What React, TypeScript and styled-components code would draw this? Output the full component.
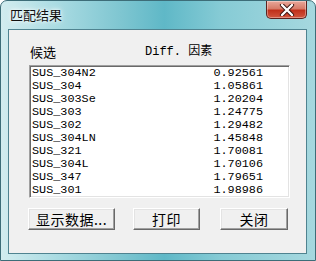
import React from 'react';
import styled, { createGlobalStyle } from 'styled-components';

const Global = createGlobalStyle`
  html, body {
    margin: 0;
    padding: 0;
    background: #ffffff;
  }
`;

const Frame = styled.div`
  width: 316px;
  height: 261px;
  box-sizing: border-box;
  border: 1px solid #3d6d78;
  border-radius: 7px 7px 0 0;
  background: linear-gradient(90deg, #d2ecef 0%, #a9dbe2 18%, #7fc6d1 38%, #5fb8c7 52%, #86cbd5 70%, #a6d8df 100%);
  display: flex;
  flex-direction: column;
  overflow: hidden;
  font-family: 'Noto Sans CJK SC', sans-serif;
`;

const TitleBar = styled.div`
  height: 28px;
  display: flex;
  align-items: flex-start;
  justify-content: space-between;
  padding: 0 8px 0 9px;
`;

const Title = styled.span`
  margin-top: 5px;
  font-size: 13px;
  line-height: 17px;
  color: #101010;
  text-shadow: 0 0 6px #ffffff, 0 0 3px #ffffff;
`;

const CloseButton = styled.div`
  width: 41px;
  height: 18px;
  box-sizing: border-box;
  border: 1px solid #5b2320;
  border-top: none;
  border-radius: 0 0 5px 5px;
  background: linear-gradient(180deg, #e9a89b 0%, #d77b68 45%, #c0301b 55%, #d2563f 100%);
  display: flex;
  align-items: center;
  justify-content: center;
  box-shadow: inset 0 0 0 1px rgba(255, 255, 255, 0.35);
`;

const Client = styled.div`
  margin: 0 8px 0 7px;
  height: 225px;
  box-sizing: border-box;
  border: 1px solid #4f8390;
  background: #f0f0f0;
  padding: 14px 0 0 20px;
  display: flex;
  flex-direction: column;
`;

const Header = styled.div`
  display: grid;
  grid-template-columns: 115px auto;
  height: 16px;
  line-height: 16px;
  padding-left: 1px;
  font-family: 'Liberation Mono', 'Noto Sans CJK SC', monospace;
  font-size: 12px;
  color: #000;

  & > span:first-child {
    font-family: 'Noto Sans CJK SC', sans-serif;
    font-size: 13px;
  }
`;

const ListBox = styled.div`
  margin-top: 5px;
  width: 261px;
  height: 133px;
  box-sizing: border-box;
  background: #ffffff;
  border-top: 1px solid #a0a0a0;
  border-left: 1px solid #a0a0a0;
  border-right: 1px solid #ffffff;
  border-bottom: 1px solid #ffffff;
  box-shadow: inset 1px 1px 0 #696969, inset -1px -1px 0 #e3e3e3;
  padding: 1px 26px 0 2px;
`;

const Row = styled.div`
  display: flex;
  justify-content: space-between;
  height: 13px;
  line-height: 13px;
  font-family: 'Liberation Mono', monospace;
  font-size: 11.8px;
  color: #000;
`;

const Buttons = styled.div`
  display: flex;
  margin-top: 10px;
  margin-left: -1px;
`;

const Button = styled.div<{ $w: number; $gap?: number }>`
  width: ${p => p.$w}px;
  height: 22px;
  margin-left: ${p => p.$gap ?? 0}px;
  box-sizing: border-box;
  border-top: 1px solid #ffffff;
  border-left: 1px solid #ffffff;
  border-right: 1px solid #696969;
  border-bottom: 1px solid #696969;
  box-shadow: inset -1px -1px 0 #a0a0a0, inset 1px 1px 0 #e3e3e3;
  background: #f0f0f0;
  display: flex;
  align-items: center;
  justify-content: center;
  font-size: 14px;
  color: #000;
  letter-spacing: 0.5px;
`;

const rows: [string, string][] = [
  ['SUS_304N2', '0.92561'],
  ['SUS_304', '1.05861'],
  ['SUS_303Se', '1.20204'],
  ['SUS_303', '1.24775'],
  ['SUS_302', '1.29482'],
  ['SUS_304LN', '1.45848'],
  ['SUS_321', '1.70081'],
  ['SUS_304L', '1.70106'],
  ['SUS_347', '1.79651'],
  ['SUS_301', '1.98986'],
];

export default function App() {
  return (
    <>
      <Global />
      <Frame>
        <TitleBar>
          <Title>匹配结果</Title>
          <CloseButton>
            <svg width="16" height="12" viewBox="0 0 16 12">
              <path d="M3 1 L13 11 M13 1 L3 11" stroke="#3a1410" strokeWidth="4.2" strokeLinecap="round" />
              <path d="M3 1 L13 11 M13 1 L3 11" stroke="#ffffff" strokeWidth="2.4" strokeLinecap="round" />
            </svg>
          </CloseButton>
        </TitleBar>
        <Client>
          <Header>
            <span>候选</span>
            <span>Diff. 因素</span>
          </Header>
          <ListBox>
            {rows.map(([name, val]) => (
              <Row key={name}>
                <span>{name}</span>
                <span>{val}</span>
              </Row>
            ))}
          </ListBox>
          <Buttons>
            <Button $w={87}>显示数据...</Button>
            <Button $w={67} $gap={18}>打印</Button>
            <Button $w={68} $gap={20}>关闭</Button>
          </Buttons>
        </Client>
      </Frame>
    </>
  );
}
